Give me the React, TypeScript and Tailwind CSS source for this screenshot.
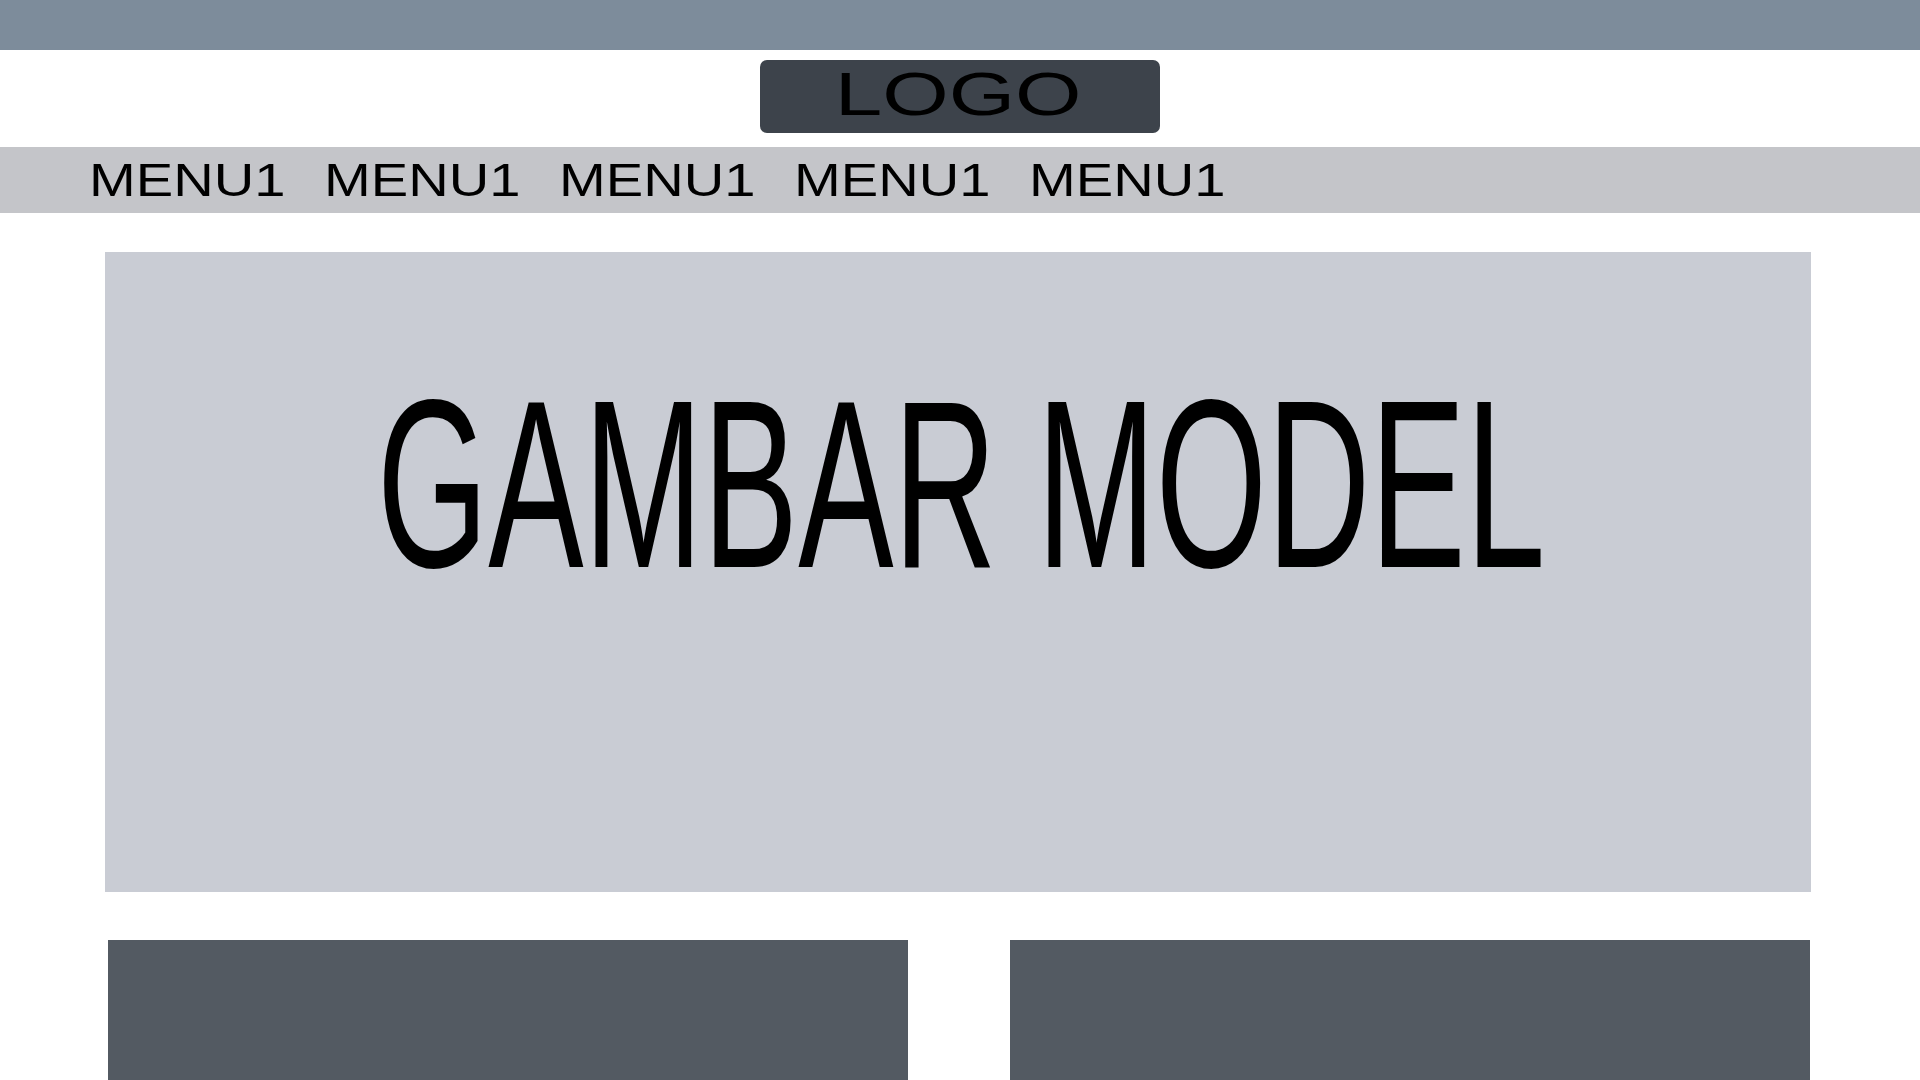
import React from "react";

export default function App() {
  const menus = ["MENU1", "MENU1", "MENU1", "MENU1", "MENU1"];
  return (
    <div className="w-[1920px] h-[1080px] overflow-hidden bg-white" style={{ fontFamily: '"Liberation Sans", Arial, sans-serif' }}>
      <div className="h-[50px] bg-[#7d8c9b]" />
      <div className="flex justify-center pt-[10px] pb-[14px]">
        <div className="w-[400px] h-[73px] rounded-[7px] bg-[#3d434b] flex items-center justify-center pb-[4px] pr-[4px]">
          <span className="text-[61px] leading-none text-black scale-x-[1.4] inline-block">LOGO</span>
        </div>
      </div>
      <div className="h-[66px] bg-[#c4c5c9] flex items-center pl-[89px] gap-[47px]">
        {menus.map((m, i) => (
          <div key={i} className="w-[188px]">
            <span className="inline-block text-[46px] leading-none text-black origin-left scale-x-[1.22]">{m}</span>
          </div>
        ))}
      </div>
      <div className="pt-[39px] pl-[105px] pr-[109px]">
        <div className="h-[640px] bg-[#c9ccd4] flex flex-col items-center pt-[112px] pl-[7px]">
          <span className="inline-block text-[240px] leading-none text-black whitespace-nowrap scale-x-[0.596]">GAMBAR MODEL</span>
        </div>
      </div>
      <div className="pt-[48px] pl-[108px] pr-[110px] flex gap-[102px]">
        <div className="flex-1 h-[300px] bg-[#535a62]" />
        <div className="flex-1 h-[300px] bg-[#535a62]" />
      </div>
    </div>
  );
}
